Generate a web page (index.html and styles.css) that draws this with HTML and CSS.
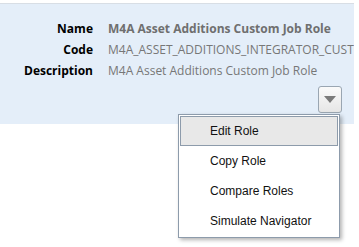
FILE: index.html
```html
<!DOCTYPE html>
<html lang="en">
<head>
    <meta charset="UTF-8">
    <title>Role Details</title>
    <link rel="stylesheet" href="styles.css">
</head>
<body>
    <div class="panel">
        <div class="details">
            <div class="label">Name</div>
            <div class="value strong">M4A Asset Additions Custom Job Role</div>
            <div class="label">Code</div>
            <div class="value">M4A_ASSET_ADDITIONS_INTEGRATOR_CUSTOM_JOB_ROLE</div>
            <div class="label">Description</div>
            <div class="value">M4A Asset Additions Custom Job Role</div>
        </div>
        <div class="actions">
            <button class="menu-button" aria-label="Actions">
                <svg width="12" height="7" viewBox="0 0 12 7"><path d="M0 0H12L6 7Z" fill="#7a7a7a"/></svg>
            </button>
        </div>
    </div>
    <ul class="menu">
        <li class="selected">Edit Role</li>
        <li>Copy Role</li>
        <li>Compare Roles</li>
        <li>Simulate Navigator</li>
    </ul>
</body>
</html>
```

FILE: styles.css
```css
body {
    margin: 0;
    background-color: white;
    font-family: "Open Sans", "Liberation Sans", sans-serif;
}

.panel {
    margin-top: 3px;
    width: 354px;
    height: 121px;
    box-sizing: border-box;
    border-top: 1px solid #d8dee5;
    background-color: #e4eef9;
    overflow: hidden;
    padding-top: 16px;
}

.details {
    display: grid;
    grid-template-columns: 93px auto;
    column-gap: 15px;
    row-gap: 3px;
    font-size: 12px;
    line-height: 18px;
    white-space: nowrap;
}

.label {
    text-align: right;
    font-weight: bold;
    color: #000;
}

.value {
    color: #777;
}

.value.strong {
    font-weight: bold;
    color: #6f6f6f;
}

.actions {
    display: flex;
    justify-content: flex-end;
    padding-right: 12px;
    margin-top: 6px;
}

.menu-button {
    width: 24px;
    height: 27px;
    padding: 0;
    border: 1px solid #9aa6b2;
    border-radius: 3px;
    background: linear-gradient(#fafafa, #e6e6e6);
    display: flex;
    align-items: center;
    justify-content: center;
}

.menu {
    position: absolute;
    left: 178px;
    top: 114px;
    width: 162px;
    margin: 0;
    padding: 1px;
    list-style: none;
    box-sizing: border-box;
    background-color: white;
    border: 1px solid #8d9bab;
    box-shadow: 2px 2px 4px rgba(0, 0, 0, 0.3);
    font-family: "Liberation Sans", Arial, sans-serif;
    font-size: 12px;
    color: #111;
}

.menu li {
    height: 30px;
    line-height: 28px;
    padding-left: 29px;
    border: 1px solid transparent;
    box-sizing: border-box;
}

.menu li.selected {
    background-color: #e8e8e8;
    border-color: #8d9bab;
}
```
